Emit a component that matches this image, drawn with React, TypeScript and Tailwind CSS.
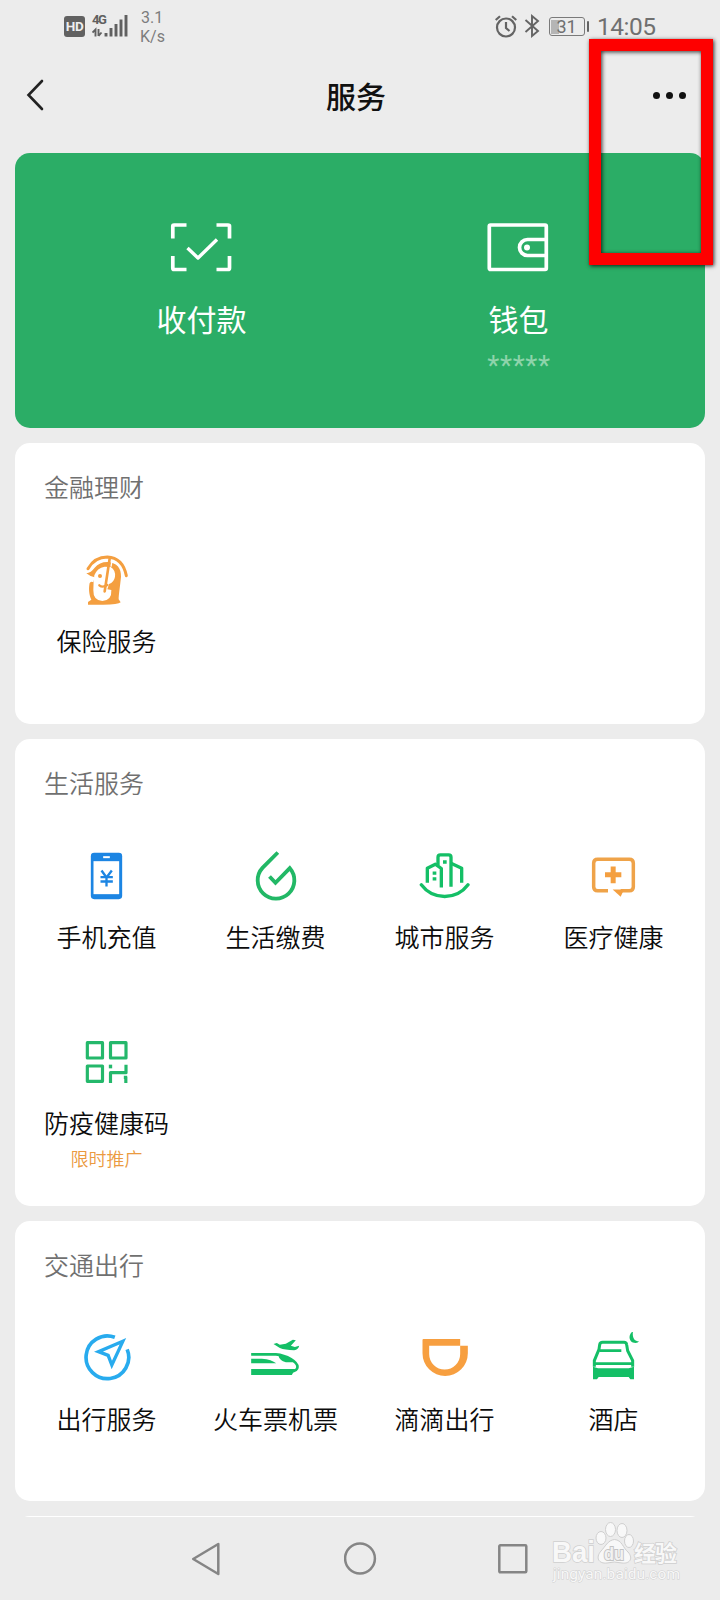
import React from 'react';

interface Service {
  label: string;
  icon: React.ReactNode;
  promo?: string;
}

const GREEN = '#14bf66';
const ORANGE = '#f49f40';

const ServiceIcon: React.FC<{ viewBox: string; children: React.ReactNode }> = ({ viewBox, children }) => (
  <svg className="w-[52px] h-[52px] -ml-px shrink-0" viewBox={viewBox} fill="none">
    {children}
  </svg>
);

const InsuranceIcon = () => (
  <ServiceIcon viewBox="240 372 156 156">
    <path d="M264 416Q284 381 322 381Q368 383 379 437" stroke={ORANGE} strokeWidth="9" strokeLinecap="round" />
    <path
      d="M259 430Q273 428 284 413Q298 396 322 396C352 398 364 416 363 440C360 470 356 496 356 508L362 517Q355 524 310 524H264V516L274 509C266 492 266 472 269 459Q274 452 280 457L284 442Q271 440 259 430Z"
      fill={ORANGE}
    />
    <path
      d="M283 436Q291 414 314 410L332 411Q347 420 345 440Q342 457 327 462L322 478L334 480Q336 511 307 513Q279 511 280 480Q280 456 283 436Z"
      fill="white"
    />
    <path d="M329 386L314 484" stroke={ORANGE} strokeWidth="8" strokeLinecap="round" />
    <path d="M298 466Q308 474 322 465" stroke={ORANGE} strokeWidth="7" strokeLinecap="round" />
    <path d="M336 392L333 410" stroke="white" strokeWidth="4" />
    <circle cx="300" cy="438" r="6" fill={ORANGE} />
  </ServiceIcon>
);

const PhoneIcon = () => (
  <ServiceIcon viewBox="150.5 328.5 156 156">
    <rect x="183" y="337" width="94" height="139" rx="10" fill="#1c85e3" />
    <path d="M191 362H268V461H191Z" fill="white" />
    <path d="M220 350H240" stroke="white" strokeWidth="6" />
    <path d="M215 390L230 411L246 390M230 411V438M212 410H249M212 423H249" stroke="#1c85e3" strokeWidth="7" />
  </ServiceIcon>
);

const DropIcon = () => (
  <ServiceIcon viewBox="657.5 328.5 156 156">
    <path d="M744 336L698 382A55 55 0 1 0 780 383L737 427L719 408" stroke="#22b866" strokeWidth="11.5" />
  </ServiceIcon>
);

const CityIcon = () => (
  <ServiceIcon viewBox="144 58.5 156 156">
    <g stroke={GREEN} strokeWidth="10" strokeLinejoin="round">
      <path d="M154 163Q180 198 224 198Q268 198 294 163" strokeLinecap="round" />
      <path d="M172 157V113L196 101L214 114V171" />
      <path d="M204 104V80Q204 73 211 73H236Q243 73 243 80V169" />
      <path d="M243 98L275 113V157" />
    </g>
    <path d="M219 89H230V100H219ZM188 123H199V133H188ZM188 140H199V150H188Z" fill={GREEN} />
  </ServiceIcon>
);

const MedicalIcon = () => (
  <ServiceIcon viewBox="651 58.5 156 156">
    <path
      d="M714 181H683Q671 181 671 169V98Q671 86 683 86H778Q790 86 790 98V169Q790 181 778 181H752"
      stroke="#efa349"
      strokeWidth="10.5"
    />
    <path d="M728 177H762L752 199Z" fill={ORANGE} />
    <path d="M705 133H754M729.500 108V158" stroke={ORANGE} strokeWidth="15" />
  </ServiceIcon>
);

const HealthCodeIcon = () => (
  <ServiceIcon viewBox="240.5 48 156 156">
    <g stroke="#24b86b" strokeWidth="9.5" strokeLinejoin="round">
      <path d="M262.500 68H308V114H262.500ZM332 68H378.500V114H332ZM262.500 138H308V184H262.500Z" />
      <path d="M332 189V158H378.500V134" />
      <path d="M332 134V145" strokeWidth="10" />
      <path d="M372 172H382M378 170V189" />
    </g>
  </ServiceIcon>
);

const TravelIcon = () => (
  <ServiceIcon viewBox="151.5 276 156 156">
    <path d="M293 328A64 64 0 1 1 256 292" stroke="#28abee" strokeWidth="11" />
    <path d="M280 304L207 335L236 346L247 375Z" stroke="#28abee" strokeWidth="10" />
  </ServiceIcon>
);

const TrainIcon = () => (
  <ServiceIcon viewBox="657.5 276 156 156">
    <path d="M664 343H738C772 346 803 366 803 381C803 391 792 394 782 395" stroke={GREEN} strokeWidth="8" />
    <path d="M664 387H796L786 405H664Z" fill={GREEN} />
    <path d="M664 356H696Q726 358 739 370H664Z" fill={GREEN} />
    <path d="M745 345Q776 350 794 367H768Q749 362 745 345Z" fill={GREEN} />
    <path
      d="M731 312L741 309L750 314L768 311L789 299L798 301L783 317L795 321L808 317Q806 328 793 331Q765 330 750 324Z"
      fill={GREEN}
    />
  </ServiceIcon>
);

const DidiIcon = () => (
  <ServiceIcon viewBox="144.5 66 156 156">
    <path
      fillRule="evenodd"
      d="M161 87H271V107H294V130A68 68 0 0 1 158 130V90Q158 87 161 87ZM178 107V132A46.500 46.500 0 0 0 271 132V107Z"
      fill="#f79f40"
    />
  </ServiceIcon>
);

const HotelIcon = () => (
  <ServiceIcon viewBox="651 66 156 156">
    <path d="M789 64C774 72 774 99 797 99Q804 99 807 94C793 94 786 82 789 64Z" fill={GREEN} />
    <path
      d="M673 170V152L687 118L689 104Q690 97 698 97H762Q769 97 770 104L773 122L788 152V170"
      stroke={GREEN}
      strokeWidth="9"
    />
    <path d="M688 122H754M674 161H788" stroke={GREEN} strokeWidth="8" />
    <path d="M669 170L684 175H776L792 170V208H781L776 201H686L681 208H669Z" fill={GREEN} />
  </ServiceIcon>
);

const finance: Service[] = [{ label: '保险服务', icon: <InsuranceIcon /> }];

const life: Service[] = [
  { label: '手机充值', icon: <PhoneIcon /> },
  { label: '生活缴费', icon: <DropIcon /> },
  { label: '城市服务', icon: <CityIcon /> },
  { label: '医疗健康', icon: <MedicalIcon /> },
  { label: '防疫健康码', icon: <HealthCodeIcon />, promo: '限时推广' },
];

const transport: Service[] = [
  { label: '出行服务', icon: <TravelIcon /> },
  { label: '火车票机票', icon: <TrainIcon /> },
  { label: '滴滴出行', icon: <DidiIcon /> },
  { label: '酒店', icon: <HotelIcon /> },
];

const StatusBar = () => (
  <div className="h-[52px] flex items-start text-[#707070] font-['Roboto',sans-serif]">
    <div className="ml-16 mt-4 w-[21px] h-[21px] rounded-[3px] bg-[#616161] text-[#eee] text-[13.5px] leading-[21px] font-bold text-center tracking-[-0.5px]">
      HD
    </div>
    <div className="relative ml-[7px] mt-[14px] w-[36px] h-[23px] text-[#606060]">
      <span className="block text-[13px] leading-[12px] font-bold tracking-[-1.5px]">4G</span>
      <svg className="absolute inset-0" width="36" height="23" viewBox="0 0 36 23" fill="none" stroke="currentColor">
        <path d="M0.500 18.500L3.500 15.500V22.500M6.500 15V22M6.500 22L9.500 18.500" strokeWidth="1.900" />
        <path d="M14 22.500V19M19 22.500V14M24 22.500V10M29 22.500V5.500M34 22.500V1" strokeWidth="2.900" />
      </svg>
    </div>
    <div className="ml-[12px] mt-[9px] text-[16px] leading-[18.5px] text-[#7c7c7c]">
      <div className="pl-px">3.1</div>
      <div>K/s</div>
    </div>
    <div className="flex-1" />
    <svg className="mt-[15px] w-[22px] h-[23px]" viewBox="0 0 22 23" fill="none" stroke="#646464" strokeWidth="2.200">
      <circle cx="11" cy="12.500" r="9" />
      <path d="M11 7V13L14.500 16M0.700 5L5 1.200M21.300 5L17 1.200" />
    </svg>
    <svg className="ml-[7px] mt-[14px] w-4 h-6" viewBox="0 0 16 24" fill="none" stroke="#646464" strokeWidth="1.900">
      <path d="M1.500 6L14 17L8 22V2L14 7L1.500 18" />
    </svg>
    <div className="ml-[9px] mt-[17px] flex items-center">
      <div className="relative w-[36px] h-[19px] rounded-[3px] border border-[#7a7a7a] p-[1.5px]">
        <div className="w-[8px] h-full bg-[#b5b5b5]" />
        <span className="absolute inset-0 text-center text-[18px] leading-[18px]">31</span>
      </div>
      <div className="ml-[2px] w-[2.500px] h-[11px] rounded-sm bg-[#646464]" />
    </div>
    <div className="ml-[8px] mr-[65px] mt-[13px] w-[58px] text-[24.5px] leading-[28px] whitespace-nowrap tracking-[-0.5px]">14:05</div>
  </div>
);

const Header = () => (
  <header className="h-[101px] grid grid-cols-3 pb-[15px] items-center">
    <svg className="ml-[26px] w-[18px] h-[32px]" viewBox="0 0 18 32" fill="none">
      <path d="M16 2L2.500 16L16 30" stroke="#222" strokeWidth="2.600" strokeLinecap="round" />
    </svg>
    <h1 className="text-center text-[30px] leading-10 font-medium text-[#111] pr-[8px] -mt-px">服务</h1>
    <div className="flex justify-end gap-[6px] pr-[34px] pt-px">
      <span className="w-[7px] h-[7px] rounded-full bg-[#111]" />
      <span className="w-[7px] h-[7px] rounded-full bg-[#111]" />
      <span className="w-[7px] h-[7px] rounded-full bg-[#111]" />
    </div>
  </header>
);

const PayCard = () => (
  <div className="h-[275px] shrink-0 rounded-[15px] bg-[#2bad66] px-[28px] pt-[69px] grid grid-cols-2 text-white">
    <div className="flex flex-col items-center">
      <svg className="w-[62px] h-[50px] -ml-px" viewBox="0 0 62 50" fill="none" stroke="white" strokeWidth="3.700">
        <path d="M16.500 3H4Q2.800 3 2.800 4V16.500M46.500 3H58Q59.500 3 59.500 4V16.500M2.800 34V46Q2.800 47.500 4 47.500H16.500M46.500 47.500H58Q59.500 47.500 59.500 46V34" />
        <path d="M17.500 26L28 36L47 17.500" strokeLinejoin="round" strokeWidth="3.400" />
      </svg>
      <span className="mt-[26px] text-[30px] leading-10">收付款</span>
    </div>
    <div className="flex flex-col items-center">
      <svg className="w-[62px] h-[50px] -ml-px" viewBox="0 0 62 50" fill="none" stroke="white" strokeWidth="3.700">
        <rect x="2.300" y="3" width="57" height="44.500" rx="1.200" />
        <path d="M59 17.500H40.500A8 8 0 0 0 40.500 33.500H59" />
        <circle cx="40" cy="25.500" r="3" fill="white" stroke="none" />
      </svg>
      <span className="mt-[26px] text-[30px] leading-10">钱包</span>
      <span className="mt-[12px] text-[28px] leading-8 pl-px tracking-[0.6px] text-[#8ed4ab] font-['Roboto',sans-serif]">*****</span>
    </div>
  </div>
);

const Section: React.FC<{ title: string; services: Service[] }> = ({ title, services }) => (
  <section className="shrink-0 rounded-[15px] bg-white pt-[24px] pb-[30px]">
    <h2 className="pl-[29px] text-[25px] leading-[38px] font-[350] text-[#707070]">{title}</h2>
    <div className="grid grid-cols-4 px-[7px] pt-0.5">
      {services.map((service) => (
        <div key={service.label} className="h-[186.5px] pt-[47px] flex flex-col items-center">
          {service.icon}
          <span className="mt-[16px] text-[25px] leading-9 font-[350] text-[#0c0c0c] whitespace-nowrap">{service.label}</span>
          {service.promo && <span className="mt-[6px] text-[18px] leading-6 font-[350] text-[#eb9a40]">{service.promo}</span>}
        </div>
      ))}
    </div>
  </section>
);

const Watermark = () => (
  <div className="absolute left-[552px] top-[1520px] w-[136px] h-[70px] text-[#fafafa]">
    <svg className="w-full h-full" viewBox="0 0 136 70" fill="#f8f8f8" stroke="#cfcfcf" strokeWidth="1">
      <ellipse cx="49" cy="18" rx="5" ry="6.500" />
      <ellipse cx="58.500" cy="9.500" rx="5" ry="7" />
      <ellipse cx="70" cy="10.500" rx="5" ry="7" />
      <ellipse cx="77" cy="21" rx="4.500" ry="6.500" />
      <path d="M62.500 19.500C70 20 71 28 76 32C82 39 77 44 70 43Q62 41 55 43C47 44 43 38 49 31C53 27 56 20 62.500 19.500Z" />
      <g fontFamily="'Liberation Sans', sans-serif" fontWeight="bold" paintOrder="stroke">
        <text x="0" y="42" fontSize="29" strokeWidth="1.500" textLength="43" lengthAdjust="spacingAndGlyphs">Bai</text>
        <text x="52" y="40" fontSize="18" fill="#f2f2f2" stroke="#c4c4c4" strokeWidth="2" textLength="20" lengthAdjust="spacingAndGlyphs">du</text>
      </g>
      <text x="82" y="41" fontSize="22" strokeWidth="1.500" fontWeight="bold" fontFamily="'Noto Sans CJK SC', sans-serif" textLength="43" paintOrder="stroke">经验</text>
      <text x="1" y="59" fontSize="15.500" fontFamily="Roboto, sans-serif" textLength="127" paintOrder="stroke">jingyan.baidu.com</text>
    </svg>
  </div>
);

const NavBar = () => (
  <nav className="h-[83px] grid grid-cols-[412px_1fr_1fr] text-[#858585]">
    <div className="flex items-center justify-between pl-[191px] pr-[35.5px]">
      <svg className="w-[30px] h-[36px]" viewBox="0 0 30 36" fill="none" stroke="currentColor" strokeWidth="2.500" strokeLinejoin="round">
        <path d="M2.200 18L27.300 3V33Z" />
      </svg>
      <svg className="w-[33px] h-[33px]" viewBox="0 0 33 33" fill="none" stroke="currentColor" strokeWidth="2.500">
        <circle cx="16" cy="16.500" r="14.900" />
      </svg>
    </div>
    <div className="flex items-center pl-[86px]">
      <svg className="w-[30px] h-[30px]" viewBox="0 0 30 30" fill="none" stroke="currentColor" strokeWidth="2.500">
        <rect x="1.300" y="1.300" width="27" height="27" rx="1" />
      </svg>
    </div>
  </nav>
);

export default function App() {
  return (
    <div className="relative w-[720px] h-[1600px] overflow-hidden bg-[#ececec] flex flex-col font-['Noto_Sans_CJK_SC',sans-serif]">
      <StatusBar />
      <Header />
      <main className="h-[1364px] shrink-0 overflow-hidden px-[15px] flex flex-col gap-[15px]">
        <PayCard />
        <Section title="金融理财" services={finance} />
        <Section title="生活服务" services={life} />
        <Section title="交通出行" services={transport} />
        <div className="h-20 shrink-0 rounded-[15px] bg-white" />
      </main>
      <NavBar />

      {/* highlight around the menu button */}
      <div className="absolute left-[589px] top-[39px] w-[124px] h-[226px] border-[12px] border-[#fe0000] shadow-[1px_1px_4px_rgba(0,0,0,0.8),inset_1px_1px_4px_rgba(0,0,0,0.8)]" />
      <Watermark />
    </div>
  );
}
